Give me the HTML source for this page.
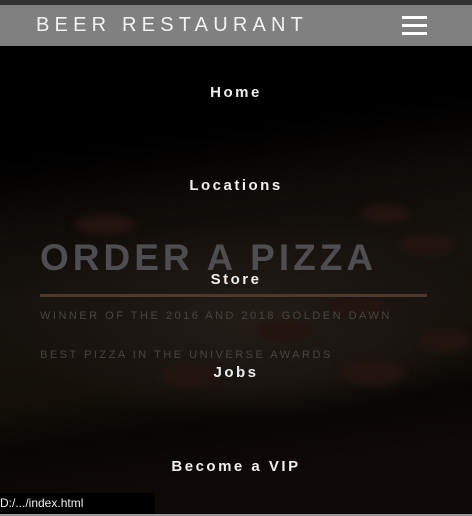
<!DOCTYPE html>
<html><head><meta charset="utf-8"><style>
*{margin:0;padding:0;box-sizing:border-box}
html,body{width:472px;height:516px;overflow:hidden;background:#000;font-family:"Liberation Sans",sans-serif}
.bg{position:absolute;left:0;top:0;width:472px;height:516px;background:
radial-gradient(ellipse 250px 100px at 250px 320px,#231d18 0%,#1a1511 60%,rgba(20,14,10,0) 100%),
linear-gradient(172deg,#000 0px,#000 160px,#0f0b08 230px,#16120e 300px,#141009 400px,#080504 450px,#0e0906 500px);}
.spot{position:absolute;border-radius:50%;background:#24140f;filter:blur(4px)}
.top{position:absolute;left:0;top:0;width:472px;height:5px;background:#333}
.hdr{position:absolute;left:0;top:5px;width:472px;height:41px;background:#808080}
.brand{position:absolute;left:36px;top:9px;color:#f2f2f2;font-size:20px;letter-spacing:5.2px}
.bar{position:absolute;left:402px;width:25px;height:3px;background:#fff}
.nav{position:absolute;left:0;width:472px;text-align:center;color:#eee;font-weight:bold;font-size:15px;letter-spacing:2.5px}
.h1{position:absolute;left:40px;top:237px;color:#4e4e52;font-weight:bold;font-size:37px;letter-spacing:4px;white-space:nowrap}
.line{position:absolute;left:40px;top:294px;width:387px;height:3px;background:#4d3a2c}
.sm{position:absolute;left:40px;color:#474541;font-size:11px;letter-spacing:2.5px;white-space:nowrap}
.status{position:absolute;left:0;top:493px;width:155px;height:21px;background:#000;color:#eee;font-size:12px;padding-top:3px}
.bot{position:absolute;left:0;top:514px;width:472px;height:2px;background:#9a9a9a}
</style></head><body>
<div class="bg"></div>
<div class="spot" style="left:75px;top:215px;width:60px;height:20px"></div>
<div class="spot" style="left:360px;top:205px;width:50px;height:18px"></div>
<div class="spot" style="left:400px;top:235px;width:55px;height:20px"></div>
<div class="spot" style="left:255px;top:320px;width:60px;height:22px"></div>
<div class="spot" style="left:330px;top:295px;width:55px;height:22px"></div>
<div class="spot" style="left:160px;top:365px;width:60px;height:22px"></div>
<div class="spot" style="left:340px;top:360px;width:65px;height:25px"></div>
<div class="spot" style="left:420px;top:330px;width:50px;height:22px"></div>
<div class="top"></div>
<div class="hdr"><div class="brand">BEER RESTAURANT</div>
<div class="bar" style="top:11px"></div><div class="bar" style="top:19px"></div><div class="bar" style="top:27px"></div></div>
<div class="h1">ORDER A PIZZA</div>
<div class="line"></div>
<div class="sm" style="top:310px">WINNER OF THE 2016 AND 2018 GOLDEN DAWN</div>
<div class="sm" style="top:349px">BEST PIZZA IN THE UNIVERSE AWARDS</div>
<div class="nav" style="top:84px">Home</div>
<div class="nav" style="top:177px">Locations</div>
<div class="nav" style="top:271px">Store</div>
<div class="nav" style="top:364px">Jobs</div>
<div class="nav" style="top:458px">Become a VIP</div>
<div class="status">D:/.../index.html</div>
<div class="bot"></div>
</body></html>
